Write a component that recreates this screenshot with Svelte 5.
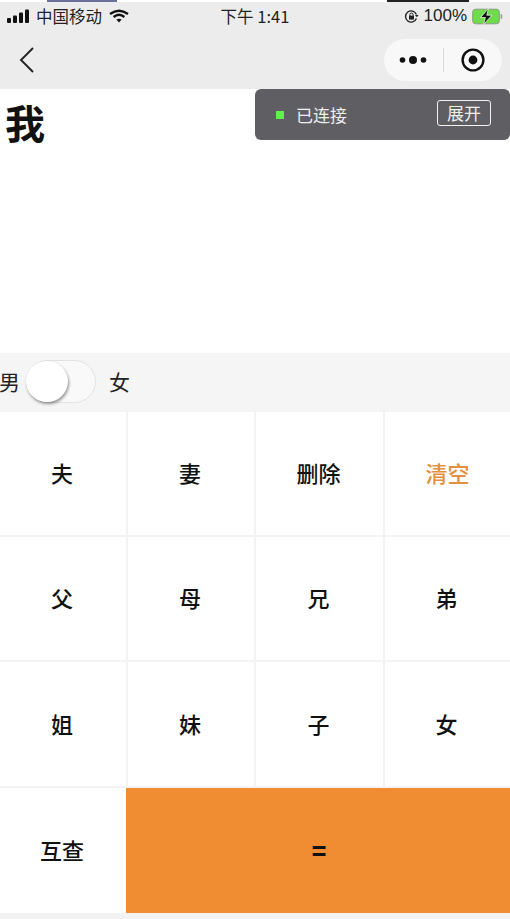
<script>
  const keys = [
    ['夫', '妻', '删除', '清空'],
    ['父', '母', '兄', '弟'],
    ['姐', '妹', '子', '女']
  ];
</script>

<div class="page">
  <div class="top-strip">
    <span class="scrap scrap-a"></span>
    <span class="scrap scrap-b"></span>
  </div>

  <header class="nav">
    <div class="status">
      <div class="status-left">
        <svg width="23" height="14" viewBox="0 0 23 14" fill="#111">
          <rect x="0" y="9" width="4" height="5" rx="1" />
          <rect x="6" y="6.5" width="4" height="7.5" rx="1" />
          <rect x="12" y="3.5" width="4" height="10.5" rx="1" />
          <rect x="18" y="0.5" width="4" height="13.5" rx="1" />
        </svg>
        <span class="carrier">中国移动</span>
        <svg class="wifi" width="20" height="14" viewBox="0 0 20 14" fill="none" stroke="#111" stroke-width="2.4">
          <path d="M1 5 Q10 -1.5 19 5" />
          <path d="M4.6 8 Q10 3.6 15.4 8" />
          <path d="M10 13.4 L7.4 10.6 Q10 8.8 12.6 10.6 Z" fill="#111" stroke="none" />
        </svg>
      </div>
      <div class="status-time">下午 1:41</div>
      <div class="status-right">
        <svg width="15" height="15" viewBox="0 0 15 15" fill="none" stroke="#222" stroke-width="1.4">
          <path d="M12.4 9.5 A5.6 5.6 0 1 1 12.4 5.5" />
          <path d="M11 6 L14.6 6 L12.8 8.2 Z" fill="#222" stroke="none" />
          <rect x="5" y="6.6" width="5" height="4" fill="#222" stroke="none" />
          <path d="M5.9 6.8 V5.6 A1.6 1.6 0 0 1 9.1 5.6 V6.8" stroke-width="1" />
        </svg>
        <span>100%</span>
        <svg width="32" height="17" viewBox="0 0 32 17">
          <rect x="0.7" y="1.2" width="26.6" height="14.6" rx="3" fill="#6fdc4c" stroke="#8a9a80" stroke-width="1" />
          <rect x="28.6" y="6" width="1.6" height="5" rx="0.8" fill="#999" />
          <path d="M16.5 0.5 L8.5 9.6 H13.4 L11.5 16.5 L20 7.2 H14.8 Z" fill="#111" stroke="#e8f5e0" stroke-width="0.8" />
        </svg>
      </div>
    </div>

    <div class="nav-bar">
      <svg class="back" width="16" height="28" viewBox="0 0 16 28" fill="none" stroke="#222" stroke-width="1.9">
        <path d="M14 2 L2 14 L14 26" />
      </svg>
      <div class="capsule">
        <div class="capsule-part">
          <svg width="28" height="12" viewBox="0 0 28 12" fill="#111">
            <circle cx="3.5" cy="6" r="2.8" />
            <circle cx="14" cy="6" r="4" />
            <circle cx="24.5" cy="6" r="2.8" />
          </svg>
        </div>
        <div class="capsule-line"></div>
        <div class="capsule-part">
          <svg width="24" height="24" viewBox="0 0 24 24">
            <circle cx="12" cy="12" r="10.4" fill="none" stroke="#111" stroke-width="2.4" />
            <circle cx="12" cy="12" r="4.4" fill="#111" />
          </svg>
        </div>
      </div>
    </div>
  </header>

  <main class="result">
    <h1>我</h1>
    <div class="toast">
      <span class="dot"></span>
      <span class="toast-text">已连接</span>
      <span class="toast-btn">展开</span>
    </div>
  </main>

  <div class="gender">
    <span class="male">男</span>
    <div class="switch"><div class="knob"></div></div>
    <span class="female">女</span>
  </div>

  <div class="pad">
    {#each keys as row}
      {#each row as key}
        <div class="key" class:accent={key === '清空'}>{key}</div>
      {/each}
    {/each}
    <div class="key lookup">互查</div>
    <div class="key equals">=</div>
  </div>
</div>

<style>
  :global(body) {
    margin: 0;
    background: #f2f2f2;
  }

  .page {
    width: 510px;
    height: 919px;
    overflow: hidden;
    display: flex;
    flex-direction: column;
    font-family: "Noto Sans CJK SC", "Liberation Sans", sans-serif;
    color: #111;
  }

  .top-strip {
    height: 2px;
    background: #fff;
    display: flex;
  }

  .scrap {
    display: block;
    height: 2px;
  }

  .scrap-a {
    width: 70px;
    margin-left: 47px;
    background: #6a6f9c;
  }

  .scrap-b {
    width: 82px;
    margin-left: 270px;
    background: #222;
  }

  .nav {
    height: 87px;
    background: #ececec;
    display: flex;
    flex-direction: column;
  }

  .status {
    height: 28px;
    display: grid;
    grid-template-columns: 1fr auto 1fr;
    align-items: center;
    padding: 0 6px 0 7px;
    font-size: 16.5px;
    color: #222;
  }

  .status-left {
    display: flex;
    align-items: center;
    gap: 6px;
  }

  .wifi {
    margin-left: 1px;
  }

  .status-time {
    font-size: 16.5px;
    white-space: nowrap;
    padding-right: 1px;
  }

  .status-right {
    display: flex;
    align-items: center;
    justify-content: flex-end;
    gap: 5px;
    font-family: "Liberation Sans", sans-serif;
    font-size: 17px;
  }

  .nav-bar {
    flex: 1;
    display: flex;
    align-items: flex-start;
    justify-content: space-between;
    padding: 9px 8px 0 19px;
  }

  .back {
    margin-top: 7px;
  }

  .capsule {
    width: 118px;
    height: 42px;
    background: #f8f8f8;
    border-radius: 21px;
    display: flex;
    align-items: center;
  }

  .capsule-part {
    flex: 1;
    display: flex;
    justify-content: center;
    align-items: center;
  }

  .capsule-line {
    width: 1px;
    height: 24px;
    background: #d8d8d8;
  }

  .result {
    position: relative;
    height: 264px;
    background: #fff;
  }

  h1 {
    margin: 0;
    padding: 5px 0 0 5px;
    font-size: 40px;
    line-height: 56px;
    font-weight: 700;
    color: #111;
  }

  .toast {
    position: absolute;
    top: 0;
    left: 255px;
    width: 255px;
    height: 51px;
    box-sizing: border-box;
    padding: 0 19px 0 21px;
    background: #5f5f63;
    border-radius: 6px;
    display: flex;
    align-items: center;
    color: #eee;
    font-size: 17px;
  }

  .dot {
    width: 8px;
    height: 8px;
    background: #5ff04a;
    margin-right: 12px;
  }

  .toast-text {
    flex: 1;
  }

  .toast-btn {
    width: 54px;
    height: 26px;
    box-sizing: border-box;
    border: 1px solid #f2f2f2;
    border-radius: 3px;
    text-align: center;
    line-height: 23px;
    margin-top: -3px;
  }

  .gender {
    height: 58px;
    background: #f5f5f5;
    display: flex;
    align-items: center;
    font-size: 21px;
    color: #222;
    padding-bottom: 2px;
    box-sizing: border-box;
  }

  .male {
    margin-left: -1px;
  }

  .switch {
    width: 70px;
    height: 43px;
    margin-left: 6px;
    box-sizing: border-box;
    border: 1px solid #e2e2e2;
    border-radius: 22px;
    background: #f9f9f9;
    position: relative;
  }

  .knob {
    position: absolute;
    left: -1px;
    top: 0;
    width: 42px;
    height: 41px;
    border-radius: 50%;
    background: #fff;
    box-shadow: 1px 2px 3px rgba(0, 0, 0, 0.4);
  }

  .female {
    margin-left: 13px;
  }

  .pad {
    display: grid;
    grid-template-columns: 126px 126px 127px 125px;
    grid-template-rows: 123px 123px 124px 125px;
    gap: 2px;
    padding-top: 1px;
    background: #f3f3f3;
  }

  .key {
    background: #fff;
    display: flex;
    align-items: center;
    justify-content: center;
    box-sizing: border-box;
    padding: 0 2px 3px 0;
    font-size: 22px;
    font-weight: 500;
    color: #111;
  }

  .key.accent {
    color: #e39040;
    padding-right: 0;
  }

  .key.equals {
    grid-column: 2 / 5;
    margin-left: -2px;
    margin-right: -2px;
    padding: 0 0 2px 0;
    background: #f08d33;
    font-size: 24px;
    font-weight: 900;
  }
</style>
